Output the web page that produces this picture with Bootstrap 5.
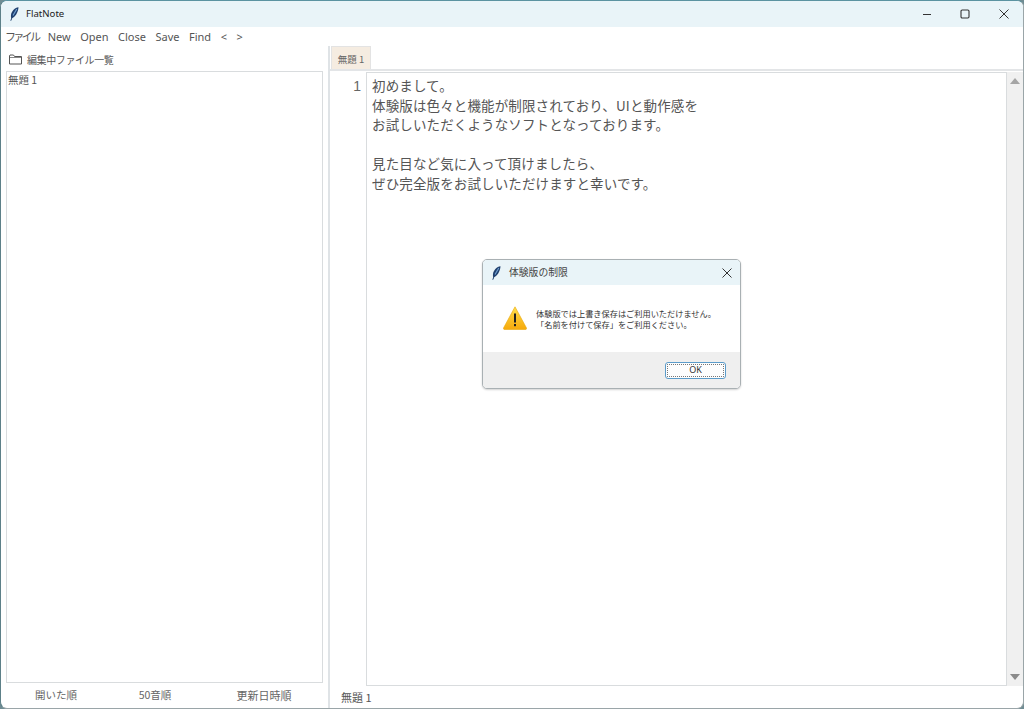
<!DOCTYPE html>
<html lang="ja"><head><meta charset="utf-8"><title>FlatNote</title>
<link rel="stylesheet" href="https://cdn.jsdelivr.net/npm/bootstrap@5.3.0/dist/css/bootstrap.min.css">
<style>
html,body{height:100%;background:#6f8c93;overflow:hidden}
body{font-family:"Noto Sans CJK JP","Liberation Sans",sans-serif;color:#333;font-size:11px}
.win{width:1024px;height:709px;background:#fff;border-radius:7px;border:1px solid #9aa5a8;border-top-color:#5b93a1;border-left-color:#5d8088;position:relative;overflow:hidden}
.tbar{height:26px;background:#e9f4f8;padding-left:9px}
.tbar .ttl{font-size:9.6px;font-family:"Noto Sans","Liberation Sans",sans-serif;margin-left:7px;color:#222}
.wbtn{width:38.5px;height:26px}
.mbar{height:21px;padding:2px 0 0 4px;gap:9.5px;font-size:11px;font-family:"Noto Sans","Noto Sans CJK JP",sans-serif;color:#555}
.mfile{letter-spacing:-2.7px}
.leftp{width:329px;padding-left:5px;border-right:2px solid #dfe3e6}
.lhd{height:25px;padding:2px 0 0 3px;font-size:10px;letter-spacing:-.4px;gap:5px;color:#555}
.lbox{width:317px;height:612px;border:1px solid #d9dcde;padding:0 1px;font-size:10.5px;color:#555;line-height:15px}
.sorts{height:24px;font-size:10.5px;color:#666}
.s1{width:100px;text-align:center}.s2{width:98px;text-align:center}.s3{width:120px;text-align:center;font-size:11px}
.rightp{width:693px}
.tabrow{height:25px;border-bottom:2px solid #e3e5e7}
.tabx{width:40px;height:23px;margin-left:1px;background:#f5ece1;border:1px solid #e3e3e3;border-bottom:0;font-size:9.5px;color:#666;line-height:24px;text-align:center}
.edwrap{height:616px;padding-top:1px}
.gutter{width:36px;text-align:right;padding:5px 5px 0 0;font-size:14px;line-height:19.6px;color:#666;font-family:"Liberation Sans",sans-serif}
.edit{width:641px;height:614px;border:1px solid #d9dcde;padding:3px 0 0 5px;font-size:13.5px;letter-spacing:.13px;line-height:19.6px;color:#555;white-space:pre}
.sbar{width:16px;height:614px;background:#f0f0f0}
.arr{width:0;height:0;border-left:5px solid transparent;border-right:5px solid transparent;margin:6px auto}
.arr.up{border-bottom:6px solid #a5a5a5}.arr.dn{border-top:6px solid #8a8a8a}
.stat{height:21px;padding-left:11px;font-size:11px;color:#555;line-height:20px}
.dlg{position:absolute;left:481px;top:258px;width:259px;height:130px;border:1px solid #a9b0b3;border-radius:5px;background:#fff;overflow:hidden;box-shadow:0 1px 2px rgba(0,0,0,.18)}
.dhd{height:25px;background:#e9f4f8;padding:0 8px 0 9px;font-size:9.8px;color:#444;gap:8px}
.dbody{height:67px;padding:21px 0 0 20px;gap:9px;font-size:8.2px;line-height:11px;color:#333}
.dtxt{margin-top:2px}
.dft{height:36px;background:#efefef;padding:10px 14px 0 0}
.okb{width:61px;height:17px;border:1.500px solid #5b9bc9;border-radius:3px;background:#fdfdfd;font-family:"Noto Sans",sans-serif;font-size:9px;line-height:14px;text-align:center;color:#333;outline:1px dotted #777;outline-offset:-3px}
</style></head><body>
<div class="win d-flex flex-column">
 <svg width="0" height="0" class="position-absolute"><defs>
  <symbol id="feather" viewBox="0 0 9 14"><path d="M8.500 .3C5 .8 1.500 4 1 8c-.2 1.500 0 2.600.6 3.200C5 10.500 8.200 5.500 8.500 .3z" fill="#1f3f6e"/><path d="M6.800 2 3 8.500" stroke="#6f9fd0" stroke-width="1.200"/><path d="M2.200 10 .8 13.700" stroke="#1f3f6e" stroke-width="1"/></symbol>
  <linearGradient id="warn" x1="0" y1="0" x2="0" y2="1"><stop offset="0" stop-color="#ffdf4d"/><stop offset="1" stop-color="#f6a90b"/></linearGradient>
 </defs></svg>
 <div class="tbar d-flex align-items-center">
  <svg width="9" height="14"><use href="#feather"/></svg>
  <span class="ttl">FlatNote</span>
  <div class="ms-auto d-flex">
   <div class="wbtn d-flex align-items-center justify-content-center"><svg width="10" height="10"><path d="M1 5.500H9" stroke="#333" stroke-width="1.100"/></svg></div>
   <div class="wbtn d-flex align-items-center justify-content-center"><svg width="10" height="10"><rect x="1" y="1" width="8" height="8" rx="1.200" fill="none" stroke="#333" stroke-width="1.100"/></svg></div>
   <div class="wbtn d-flex align-items-center justify-content-center"><svg width="10" height="10"><path d="M.5.5 9.500 9.500M9.500.5.500 9.500" stroke="#333" stroke-width="1"/></svg></div>
  </div>
 </div>
 <div class="mbar d-flex align-items-center"><span class="mfile">ファイル</span><span>New</span><span>Open</span><span>Close</span><span>Save</span><span>Find</span><span>&lt;</span><span>&gt;</span></div>
 <div class="d-flex flex-grow-1">
  <div class="leftp d-flex flex-column">
   <div class="lhd d-flex align-items-center"><svg width="13" height="11" viewBox="0 0 13 11"><path d="M.5 2V10H12.500V2.500H5.500L4.500 1H1z" fill="none" stroke="#555" stroke-width="1"/><path d="M.5 3.500H12.500" stroke="#555" stroke-width=".7"/></svg><span>編集中ファイル一覧</span></div>
   <div class="lbox">無題 1</div>
   <div class="sorts d-flex align-items-center"><span class="s1">開いた順</span><span class="s2">50音順</span><span class="s3">更新日時順</span></div>
  </div>
  <div class="rightp d-flex flex-column">
   <div class="tabrow"><div class="tabx">無題 1</div></div>
   <div class="edwrap d-flex">
    <div class="gutter">1</div>
    <div class="edit">初めまして。
体験版は色々と機能が制限されており、UIと動作感を
お試しいただくようなソフトとなっております。

見た目など気に入って頂けましたら、
ぜひ完全版をお試しいただけますと幸いです。</div>
    <div class="sbar d-flex flex-column justify-content-between"><div class="arr up"></div><div class="arr dn"></div></div>
   </div>
   <div class="stat">無題 1</div>
  </div>
 </div>
 <div class="dlg">
  <div class="dhd d-flex align-items-center">
   <svg width="9" height="14"><use href="#feather"/></svg>
   <span>体験版の制限</span>
   <svg class="ms-auto" width="10" height="10"><path d="M.5.5 9.500 9.500M9.500.5.500 9.500" stroke="#333" stroke-width="1"/></svg>
  </div>
  <div class="dbody d-flex">
   <svg width="24" height="24" viewBox="0 0 24 24"><path d="M12 .8 23.500 22a1 1 0 0 1-.9 1.500H1.400A1 1 0 0 1 .5 22z" fill="url(#warn)" stroke="#eaa80a" stroke-width=".6" stroke-linejoin="round"/><rect x="11" y="7.500" width="2" height="9" fill="#222"/><rect x="11" y="18" width="2" height="2.200" fill="#222"/></svg>
   <div class="dtxt">体験版では上書き保存はご利用いただけません。<br>「名前を付けて保存」をご利用ください。</div>
  </div>
  <div class="dft d-flex justify-content-end"><div class="okb">OK</div></div>
 </div>
</div>
<script src="https://cdn.jsdelivr.net/npm/bootstrap@5.3.0/dist/js/bootstrap.bundle.min.js"></script>
</body></html>
